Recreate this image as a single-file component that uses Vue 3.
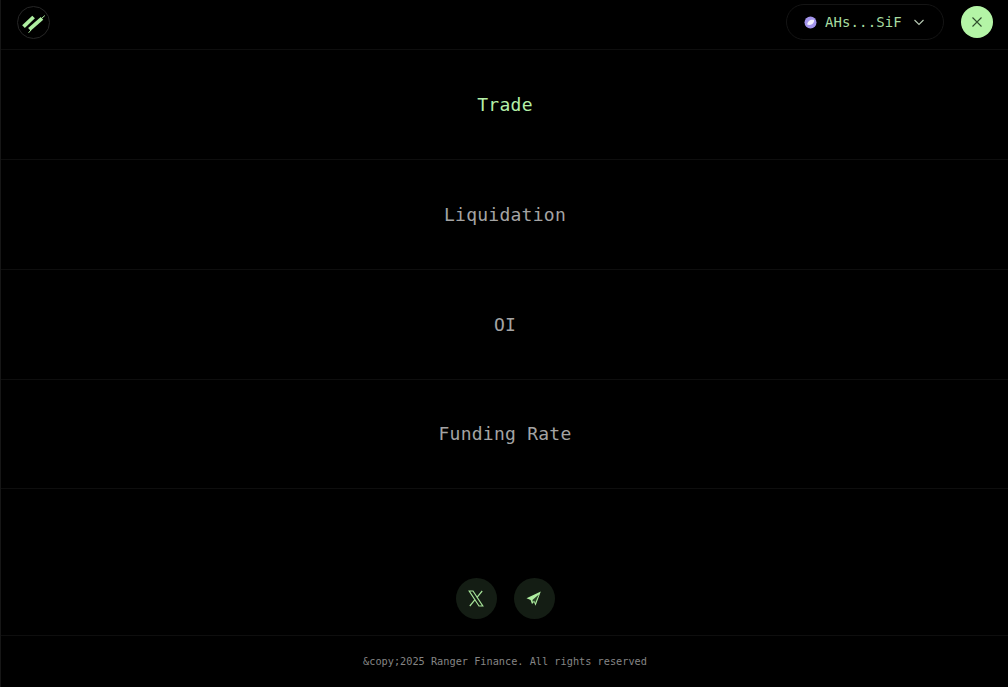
<template>
  <div class="page">
    <header class="topbar">
      <div class="logo">
        <svg width="31" height="31" viewBox="0 0 31 31">
          <path d="M5.5 19.7 L15.6 10" fill="none" stroke="#aeeea0" stroke-width="3.8" />
          <path d="M11.4 22.4 L24 11.4" fill="none" stroke="#aeeea0" stroke-width="3.8" />
          <path d="M10.6 25.8 L13 23 M23.4 11.6 L26.8 8.6" fill="none" stroke="#aeeea0" stroke-width="1" />
        </svg>
      </div>
      <div class="actions">
        <button class="wallet">
          <span class="wallet-icon">
            <svg width="13" height="13" viewBox="0 0 13 13">
              <circle cx="6.5" cy="6.5" r="6" fill="#a394ec" />
              <path d="M3.2 8.6 C3.4 5.4 6 3.2 10 3.8 C10.6 6.6 8 9.4 5 9 Z" fill="#f3f0fe" />
            </svg>
          </span>
          <span class="address">{{ address }}</span>
          <svg class="chevron" width="12" height="12" viewBox="0 0 12 12">
            <path d="M1.5 4 L6 8.5 L10.5 4" fill="none" stroke="#b9cbb5" stroke-width="1.1" />
          </svg>
        </button>
        <button class="close">
          <svg width="12" height="12" viewBox="0 0 12 12">
            <path d="M1.5 1.5 L10.5 10.5 M10.5 1.5 L1.5 10.5" stroke="#2f4d2c" stroke-width="1.1" />
          </svg>
        </button>
      </div>
    </header>

    <nav class="menu">
      <a v-for="item in items" :key="item" class="menu-item" :class="{ active: item === 'Trade' }">{{ item }}</a>
    </nav>

    <div class="socials">
      <a class="social">
        <svg width="16" height="17" viewBox="0 0 16 17">
          <path d="M1.2 1 H5 L14.8 16 H11 Z" fill="none" stroke="#a5e298" stroke-width="1.2" />
          <path d="M14.2 1 L9 7.4 M7 9.6 L1.8 16" fill="none" stroke="#a5e298" stroke-width="1.2" />
        </svg>
      </a>
      <a class="social">
        <svg width="18" height="16" viewBox="0 0 18 16">
          <path d="M15.8 0.5 L1.5 7.2 L5.6 9 L7 13 L9 11 L10.5 14.8 Z" fill="#aeeea0" />
          <path d="M13.8 3.4 L7.4 9 L7.9 11 L9.2 9.8 L10.2 12 Z" fill="#2a4428" />
        </svg>
      </a>
    </div>

    <footer class="footer">{{ copyright }}</footer>
  </div>
</template>

<script setup>
const address = 'AHs...SiF'
const items = ['Trade', 'Liquidation', 'OI', 'Funding Rate']
const copyright = '&copy;2025 Ranger Finance. All rights reserved'
</script>

<style>
html,
body {
  margin: 0;
  background: #000;
}
</style>

<style scoped>
.page {
  height: 687px;
  box-sizing: border-box;
  display: flex;
  flex-direction: column;
  background: #000;
  border-left: 1px solid #161616;
  font-family: "DejaVu Sans Mono", "Liberation Mono", monospace;
  overflow: hidden;
}

.topbar {
  height: 50px;
  box-sizing: border-box;
  flex: none;
  display: flex;
  align-items: center;
  justify-content: space-between;
  padding: 0 15px 5px 16px;
  border-bottom: 1px solid #0e0e0e;
}

.logo {
  width: 33px;
  height: 33px;
  box-sizing: border-box;
  border: 1px solid #262626;
  border-radius: 50%;
  display: flex;
  align-items: center;
  justify-content: center;
}

.actions {
  display: flex;
  align-items: center;
  gap: 17px;
}

.wallet {
  height: 36px;
  width: 158px;
  box-sizing: border-box;
  display: flex;
  align-items: center;
  padding: 0 17px;
  background: #000;
  border: 1px solid #141414;
  border-radius: 18px;
  font: inherit;
}

.wallet-icon {
  display: flex;
  margin-right: 8px;
}

.address {
  font-size: 14px;
  letter-spacing: 0.1px;
  color: #a8dca0;
}

.chevron {
  margin-left: 11px;
}

.close {
  width: 32px;
  height: 32px;
  padding: 0;
  border: none;
  border-radius: 50%;
  background: #b4f5a6;
  display: flex;
  align-items: center;
  justify-content: center;
}

.menu {
  display: flex;
  flex-direction: column;
}

.menu-item {
  height: 109.85px;
  box-sizing: border-box;
  padding-left: 1px;
  display: flex;
  align-items: center;
  justify-content: center;
  font-size: 18px;
  letter-spacing: 0.25px;
  color: #a4a4a4;
  border-bottom: 1px solid #0e0e0e;
}

.menu-item.active {
  color: #b4f0a8;
}

.socials {
  margin-top: auto;
  display: flex;
  justify-content: center;
  gap: 17px;
  padding: 0 0 16px 1px;
  border-bottom: 1px solid #0e0e0e;
}

.social {
  width: 41px;
  height: 41px;
  border-radius: 50%;
  background: #141d14;
  display: flex;
  align-items: center;
  justify-content: center;
}

.footer {
  height: 51px;
  box-sizing: border-box;
  flex: none;
  padding: 0 0 2px 1px;
  display: flex;
  align-items: center;
  justify-content: center;
  font-size: 10.25px;
  color: #858585;
}
</style>
